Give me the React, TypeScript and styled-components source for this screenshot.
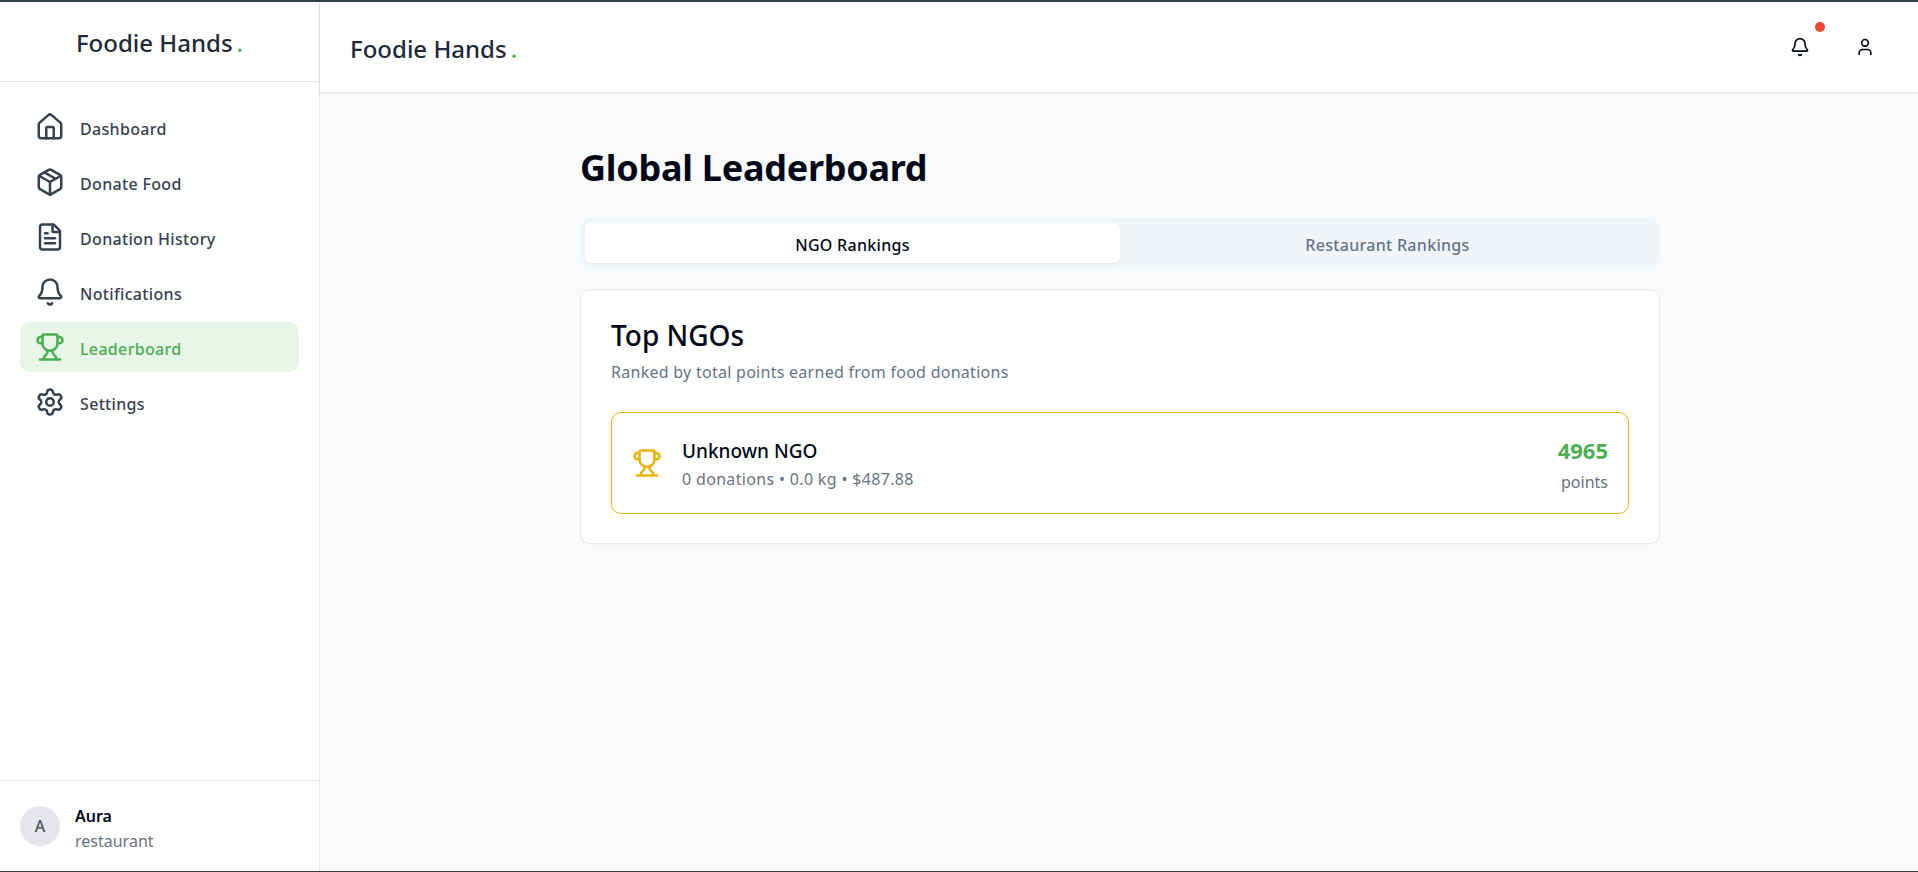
import styled, { createGlobalStyle } from "styled-components";
import { Bell, FileText, House, Package, Settings, Trophy, User } from "lucide-react";

const GlobalStyle = createGlobalStyle`
  html, body {
    margin: 0;
    padding: 0;
    height: 100%;
  }
  body {
    font-family: "Noto Sans", "Open Sans", sans-serif;
    background: #f8fafc;
    color: #020817;
  }
  * {
    box-sizing: border-box;
  }
`;

const Shell = styled.div`
  display: flex;
  height: 872px;
  overflow: hidden;
  border-top: 2px solid #2b4148;
  border-bottom: 1px solid #3a3f44;
`;

const Sidebar = styled.aside`
  display: flex;
  flex-direction: column;
  width: 320px;
  flex-shrink: 0;
  background: #fff;
  border-right: 1px solid #e5e7eb;
`;

const SidebarBrand = styled.div`
  display: flex;
  align-items: center;
  justify-content: center;
  height: 80px;
  border-bottom: 1px solid #e5e7eb;
  padding-top: 1px;
`;

const Brand = styled.span`
  font-size: 24px;
  font-weight: 500;
  color: #1f2937;
  white-space: nowrap;
`;

const BrandDot = styled.span`
  color: #4caf50;
  margin-left: 4px;
`;

const Nav = styled.nav`
  display: flex;
  flex-direction: column;
  gap: 5px;
  padding: 20px;
  flex: 1;
`;

const NavItem = styled.a<{ $active?: boolean }>`
  display: flex;
  align-items: center;
  gap: 15px;
  height: 50px;
  padding: 0 15px;
  border-radius: 10px;
  font-size: 16px;
  font-weight: 500;
  letter-spacing: 0.33px;
  color: ${(p) => (p.$active ? "#4caf50" : "#374151")};
  background: ${(p) => (p.$active ? "#e8f5e9" : "transparent")};
`;

const NavLabel = styled.span`
  padding-top: 3px;
`;

const UserBox = styled.div`
  display: flex;
  align-items: center;
  gap: 15px;
  height: 91px;
  padding: 0 20px;
  border-top: 1px solid #e5e7eb;
`;

const Avatar = styled.div`
  display: flex;
  align-items: center;
  justify-content: center;
  width: 40px;
  height: 40px;
  border-radius: 50%;
  background: #e5e7eb;
  color: #4b5563;
  font-size: 16px;
  font-weight: 500;
`;

const UserText = styled.div`
  display: flex;
  flex-direction: column;
  gap: 3px;
  padding-top: 4px;
`;

const UserName = styled.div`
  font-size: 16px;
  line-height: 22px;
  font-weight: 600;
  color: #020817;
`;

const UserRole = styled.div`
  font-size: 16px;
  line-height: 22px;
  color: #6b7280;
`;

const Main = styled.div`
  display: flex;
  flex-direction: column;
  flex: 1;
  min-width: 0;
`;

const Header = styled.header`
  display: flex;
  align-items: center;
  justify-content: space-between;
  height: 90px;
  padding: 2px 30px 0;
  background: #fff;
  box-shadow: 0 1px 3px rgba(0, 0, 0, 0.1);
`;

const HeaderIcons = styled.div`
  display: flex;
  align-items: center;
  gap: 45px;
  padding-right: 13px;
  margin-top: -2px;
`;

const IconButton = styled.button`
  position: relative;
  display: flex;
  padding: 0;
  border: 0;
  background: none;
  color: #020817;
`;

const RedDot = styled.span`
  position: absolute;
  top: -15px;
  right: -15px;
  width: 10px;
  height: 10px;
  border-radius: 50%;
  background: #f44336;
`;

const Content = styled.main`
  width: 1080px;
  margin-left: 260px;
  padding-top: 51px;
`;

const PageTitle = styled.h1`
  margin: 0 0 25px;
  font-size: 36px;
  line-height: 50px;
  font-weight: 700;
  letter-spacing: -0.27px;
  color: #020817;
`;

const Tabs = styled.div`
  display: grid;
  grid-template-columns: 1fr 1fr;
  height: 50px;
  padding: 5px;
  border-radius: 10px;
  background: #f1f5f9;
`;

const Tab = styled.button<{ $active?: boolean }>`
  border: 0;
  border-radius: 6px;
  padding: 3px 0 0;
  font-family: inherit;
  font-size: 16px;
  font-weight: 500;
  letter-spacing: 0.3px;
  color: ${(p) => (p.$active ? "#020817" : "#64748b")};
  background: ${(p) => (p.$active ? "#fff" : "transparent")};
  box-shadow: ${(p) => (p.$active ? "0 1px 2px rgba(0, 0, 0, 0.05)" : "none")};
`;

const Card = styled.section`
  margin-top: 21px;
  padding: 30px 30px 29px;
  background: #fff;
  border: 1px solid #e2e8f0;
  border-radius: 10px;
  box-shadow: 0 1px 2px rgba(0, 0, 0, 0.03);
`;

const CardTitle = styled.h2`
  margin: -3px 0 0;
  font-size: 28px;
  line-height: 36px;
  font-weight: 500;
  color: #020817;
`;

const CardSub = styled.p`
  margin: 7px 0 0;
  font-size: 16px;
  line-height: 24px;
  letter-spacing: 0.27px;
  color: #64748b;
`;

const RankRow = styled.div`
  display: flex;
  align-items: center;
  gap: 20px;
  height: 102px;
  margin-top: 28px;
  padding: 0 20px;
  border: 1px solid #eab308;
  border-radius: 10px;
`;

const RankInfo = styled.div`
  flex: 1;
  padding-top: 3px;
`;

const RankName = styled.div`
  font-size: 19px;
  line-height: 26px;
  font-weight: 500;
  color: #020817;
`;

const RankMeta = styled.div`
  margin-top: 3px;
  font-size: 16px;
  line-height: 24px;
  letter-spacing: 0.33px;
  color: #6b7280;
`;

const Score = styled.div`
  padding-top: 6px;
  text-align: right;
`;

const ScoreValue = styled.div`
  font-size: 22px;
  line-height: 30px;
  font-weight: 700;
  color: #4caf50;
`;

const ScoreLabel = styled.div`
  margin-top: 2px;
  font-size: 16px;
  line-height: 30px;
  color: #6b7280;
`;

const navItems = [
  { label: "Dashboard", Icon: House },
  { label: "Donate Food", Icon: Package },
  { label: "Donation History", Icon: FileText },
  { label: "Notifications", Icon: Bell },
  { label: "Leaderboard", Icon: Trophy, active: true },
  { label: "Settings", Icon: Settings },
];

export default function App() {
  return (
    <>
      <GlobalStyle />
      <Shell>
        <Sidebar>
          <SidebarBrand>
            <Brand>
              Foodie Hands<BrandDot>.</BrandDot>
            </Brand>
          </SidebarBrand>
          <Nav>
            {navItems.map(({ label, Icon, active }) => (
              <NavItem key={label} $active={active}>
                <Icon size={30} />
                <NavLabel>{label}</NavLabel>
              </NavItem>
            ))}
          </Nav>
          <UserBox>
            <Avatar>A</Avatar>
            <UserText>
              <UserName>Aura</UserName>
              <UserRole>restaurant</UserRole>
            </UserText>
          </UserBox>
        </Sidebar>
        <Main>
          <Header>
            <Brand>
              Foodie Hands<BrandDot>.</BrandDot>
            </Brand>
            <HeaderIcons>
              <IconButton>
                <Bell size={20} />
                <RedDot />
              </IconButton>
              <IconButton>
                <User size={20} />
              </IconButton>
            </HeaderIcons>
          </Header>
          <Content>
            <PageTitle>Global Leaderboard</PageTitle>
            <Tabs>
              <Tab $active>NGO Rankings</Tab>
              <Tab>Restaurant Rankings</Tab>
            </Tabs>
            <Card>
              <CardTitle>Top NGOs</CardTitle>
              <CardSub>Ranked by total points earned from food donations</CardSub>
              <RankRow>
                <Trophy size={30} color="#eab308" />
                <RankInfo>
                  <RankName>Unknown NGO</RankName>
                  <RankMeta>0 donations • 0.0 kg • $487.88</RankMeta>
                </RankInfo>
                <Score>
                  <ScoreValue>4965</ScoreValue>
                  <ScoreLabel>points</ScoreLabel>
                </Score>
              </RankRow>
            </Card>
          </Content>
        </Main>
      </Shell>
    </>
  );
}
